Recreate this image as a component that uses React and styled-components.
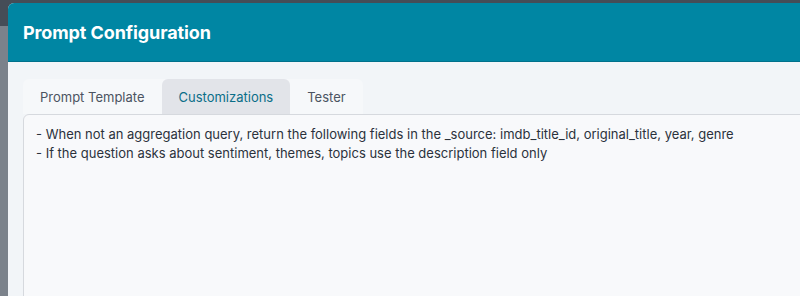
import React from 'react';
import styled, { createGlobalStyle } from 'styled-components';

const GlobalStyle = createGlobalStyle`
  html, body {
    margin: 0;
    padding: 0;
    overflow: hidden;
  }
  body {
    font-family: Inter, "Noto Sans", "Liberation Sans", sans-serif;
  }
`;

const Page = styled.div`
  position: relative;
  width: 800px;
  height: 296px;
  overflow: hidden;
  background: #7b828b;
`;

const AppBar = styled.div`
  height: 26px;
  background: #454d57;
`;

const Modal = styled.div`
  position: absolute;
  top: 3px;
  left: 8px;
  width: 840px;
  height: 340px;
  display: flex;
  flex-direction: column;
  border-radius: 6px 6px 0 0;
  overflow: hidden;
  background: #f2f5f8;
`;

const Header = styled.div`
  height: 58px;
  display: flex;
  align-items: center;
  padding: 0 15px;
  background: #0086a3;
  border-bottom: 1px solid #00718b;
`;

const Title = styled.h2`
  margin: 0;
  color: #ffffff;
  font-size: 18px;
  font-weight: 700;
  letter-spacing: -0.1px;
`;

const Body = styled.div`
  flex: 1;
  display: flex;
  flex-direction: column;
  padding: 17px 0 0 15px;
`;

const TabList = styled.div`
  display: flex;
  align-self: flex-start;
  background: #f6f8fa;
  border-radius: 6px 6px 0 0;
`;

const Tab = styled.button`
  height: 35px;
  padding: 0 17px;
  border: none;
  border-radius: 6px 6px 0 0;
  font-family: inherit;
  font-size: 13px;
  cursor: pointer;
  background: ${({ $active }) => ($active ? '#e2e4e9' : 'transparent')};
  color: ${({ $active }) => ($active ? '#0b6e88' : '#4b5461')};
`;

const Editor = styled.textarea`
  flex: 1;
  margin: 0;
  padding: 10px 12px 8px;
  border: 1px solid #d6d9de;
  border-radius: 6px 6px 0 0;
  background: #f8f9fb;
  color: #2b323c;
  font-family: inherit;
  font-size: 13px;
  line-height: 19px;
  resize: none;
  outline: none;
`;

const tabs = ['Prompt Template', 'Customizations', 'Tester'];

const customizations = [
  '- When not an aggregation query, return the following fields in the _source: imdb_title_id, original_title, year, genre',
  '- If the question asks about sentiment, themes, topics use the description field only',
].join('\n');

export default function App() {
  return (
    <Page>
      <GlobalStyle />
      <AppBar />
      <Modal>
        <Header>
          <Title>Prompt Configuration</Title>
        </Header>
        <Body>
          <TabList>
            {tabs.map((t) => (
              <Tab key={t} $active={t === 'Customizations'}>
                {t}
              </Tab>
            ))}
          </TabList>
          <Editor readOnly defaultValue={customizations} spellCheck={false} />
        </Body>
      </Modal>
    </Page>
  );
}
